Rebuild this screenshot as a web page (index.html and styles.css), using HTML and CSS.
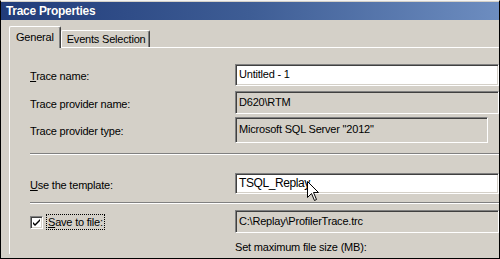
FILE: index.html
```html
<!DOCTYPE html>
<html lang="en">
<head>
    <meta charset="UTF-8">
    <title>Trace Properties</title>
    <link rel="stylesheet" href="styles.css">
</head>
<body>
    <div class="window">
        <div class="titlebar">Trace Properties</div>
        <div class="tabs">
            <div class="tab active">General</div>
            <div class="tab">Events Selection</div>
        </div>
        <div class="panel">
            <div class="row name">
                <div class="label"><u>T</u>race name:</div>
                <div class="field edit">Untitled - 1</div>
            </div>
            <div class="row provider">
                <div class="label">Trace provider name:</div>
                <div class="field">D620\RTM</div>
            </div>
            <div class="row type">
                <div class="label">Trace provider type:</div>
                <div class="field short">Microsoft SQL Server "2012"</div>
            </div>
            <div class="sep first"></div>
            <div class="row template">
                <div class="label"><u>U</u>se the template:</div>
                <div class="field edit big">TSQL_Replay</div>
                <svg class="cursor" width="13" height="21" viewBox="0 0 13 21">
                    <path d="M0.5 0.5 L0.5 16.5 L4.5 12.5 L7.5 19.5 L9.5 18.5 L6.5 11.5 L11.5 11.5 Z" fill="#fff" stroke="#000" stroke-width="1"/>
                </svg>
            </div>
            <div class="sep second"></div>
            <div class="row save">
                <div class="label">
                    <span class="check">
                        <svg width="9" height="9" viewBox="0 0 9 9"><path d="M1 4 L3 6 L8 1 L8 3 L3 8 L1 6 Z" fill="#000"/></svg>
                    </span>
                    <span class="focus"><u>S</u>ave to file:</span>
                </div>
                <div class="field">C:\Replay\ProfilerTrace.trc</div>
            </div>
            <div class="row note">
                <div class="label"></div>
                <div>Set maximum file size (MB):</div>
            </div>
        </div>
    </div>
</body>
</html>
```

FILE: styles.css
```css
* {
    margin: 0;
    padding: 0;
    box-sizing: border-box;
}

body {
    font-family: "Liberation Sans", Arial, sans-serif;
    font-size: 11px;
    letter-spacing: -0.2px;
    color: #000;
    background: #fff;
}

.window {
    width: 500px;
    height: 259px;
    overflow: hidden;
    background: #d4d0c8;
    border-left: 1px solid #000;
    border-right: 1px solid #000;
    border-bottom: 1px solid #000;
    border-top: 1px solid #f4f4f4;
}

.titlebar {
    margin-top: 1px;
    height: 18px;
    line-height: 18px;
    padding-left: 5px;
    color: #fff;
    font-weight: bold;
    font-size: 12px;
    letter-spacing: -0.3px;
    text-shadow: 1px 0 0 rgba(0, 0, 0, 0.2);
    background: linear-gradient(to right, #213c7a, #3e5d95 50%, #6d8dc0);
}

.tabs {
    display: flex;
    align-items: flex-end;
    margin-top: 6px;
    padding-left: 8px;
    height: 21px;
}

.tab {
    height: 17px;
    line-height: 16px;
    padding: 0 4px 0 5px;
    border-top: 1px solid #fff;
    border-left: 1px solid #fff;
    border-right: 1px solid #404040;
    box-shadow: inset -1px 0 #808080;
    border-radius: 2px 2px 0 0;
}

.tab.active {
    height: 22px;
    line-height: 20px;
    padding: 0 6px 0 6px;
    margin-bottom: -1px;
    position: relative;
    background: #d4d0c8;
}

.panel {
    margin-left: 8px;
    border-top: 1px solid #fff;
    border-left: 1px solid #fff;
    padding: 16px 0 0 20px;
}

/* rows only use margin-top so nothing collapses */
.row {
    display: grid;
    grid-template-columns: 205px 1fr;
    align-items: center;
    height: 22px;
}

.row .label {
    padding-top: 2px;
}

.label u {
    text-decoration: underline;
}

.field {
    height: 100%;
    line-height: 20px;
    padding-left: 3px;
    white-space: nowrap;
    border: 1px solid;
    border-color: #808080 #fff #fff #808080;
    box-shadow: inset 1px 1px #404040, inset -1px -1px #d4d0c8;
}

.field.edit {
    background: #fff;
    line-height: 19px;
}

.row.provider {
    height: 23px;
    margin-top: 5px;
}

.row.type {
    height: 26px;
    margin-top: 3px;
}

.field.short {
    width: 253px;
    line-height: 23px;
}

.sep {
    height: 2px;
    border-top: 1px solid #808080;
    border-bottom: 1px solid #fff;
}

.sep.first {
    margin-top: 10px;
}

.row.template {
    position: relative;
    height: 21px;
    margin-top: 18px;
}

.field.big {
    font-size: 12px;
    letter-spacing: -0.4px;
    line-height: 18px;
}

.cursor {
    position: absolute;
    left: 277px;
    top: 8px;
}

.sep.second {
    margin-top: 8px;
}

.row.save {
    height: 23px;
    margin-top: 6px;
}

.save .label {
    display: flex;
    align-items: center;
    padding-top: 0;
}

.check {
    width: 13px;
    height: 13px;
    display: flex;
    align-items: center;
    justify-content: center;
    background: #fff;
    border: 1px solid;
    border-color: #808080 #fff #fff #808080;
    box-shadow: inset 1px 1px #404040, inset -1px -1px #d4d0c8;
    margin-top: 2px;
}

.focus {
    margin-left: 3px;
    padding: 1px 1px;
    border: 1px dotted #000;
}

.row.note {
    height: 14px;
    margin-top: 7px;
}
```
